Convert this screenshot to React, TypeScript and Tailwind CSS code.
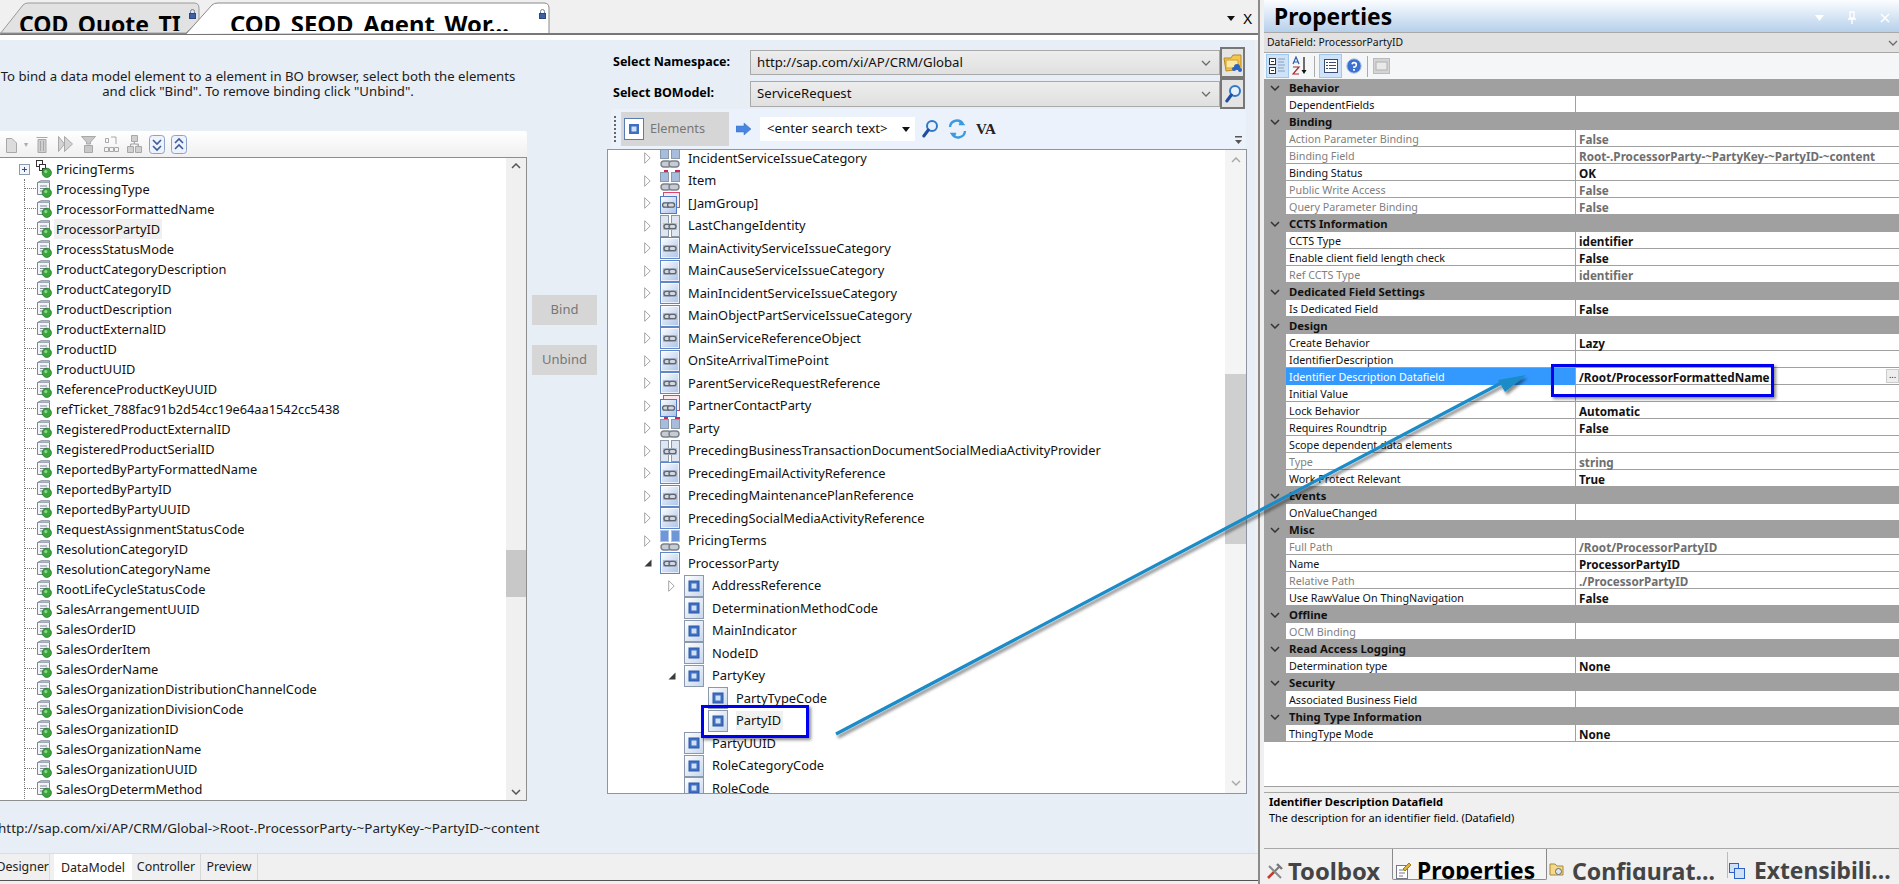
import React from "react";

const leftRows = ["PricingTerms","ProcessingType","ProcessorFormattedName","ProcessorPartyID","ProcessStatusMode","ProductCategoryDescription","ProductCategoryID","ProductDescription","ProductExternalID","ProductID","ProductUUID","ReferenceProductKeyUUID","refTicket_788fac91b2d54cc19e64aa1542cc5438","RegisteredProductExternalID","RegisteredProductSerialID","ReportedByPartyFormattedName","ReportedByPartyID","ReportedByPartyUUID","RequestAssignmentStatusCode","ResolutionCategoryID","ResolutionCategoryName","RootLifeCycleStatusCode","SalesArrangementUUID","SalesOrderID","SalesOrderItem","SalesOrderName","SalesOrganizationDistributionChannelCode","SalesOrganizationDivisionCode","SalesOrganizationID","SalesOrganizationName","SalesOrganizationUUID","SalesOrgDetermMethod"];

type Kind = "el" | "link" | "red2" | "redbox" | "split" | "blue2";
type TreeRow = { t: string; k: Kind; l: number; a: "closed" | "open" | "none" };
const rightRows: TreeRow[] = [
  { t: "IncidentServiceIssueCategory", k: "red2", l: 0, a: "closed" },
  { t: "Item", k: "red2", l: 0, a: "closed" },
  { t: "[JamGroup]", k: "redbox", l: 0, a: "closed" },
  { t: "LastChangeIdentity", k: "split", l: 0, a: "closed" },
  { t: "MainActivityServiceIssueCategory", k: "link", l: 0, a: "closed" },
  { t: "MainCauseServiceIssueCategory", k: "link", l: 0, a: "closed" },
  { t: "MainIncidentServiceIssueCategory", k: "link", l: 0, a: "closed" },
  { t: "MainObjectPartServiceIssueCategory", k: "link", l: 0, a: "closed" },
  { t: "MainServiceReferenceObject", k: "link", l: 0, a: "closed" },
  { t: "OnSiteArrivalTimePoint", k: "link", l: 0, a: "closed" },
  { t: "ParentServiceRequestReference", k: "link", l: 0, a: "closed" },
  { t: "PartnerContactParty", k: "redbox", l: 0, a: "closed" },
  { t: "Party", k: "red2", l: 0, a: "closed" },
  { t: "PrecedingBusinessTransactionDocumentSocialMediaActivityProvider", k: "split", l: 0, a: "closed" },
  { t: "PrecedingEmailActivityReference", k: "link", l: 0, a: "closed" },
  { t: "PrecedingMaintenancePlanReference", k: "link", l: 0, a: "closed" },
  { t: "PrecedingSocialMediaActivityReference", k: "link", l: 0, a: "closed" },
  { t: "PricingTerms", k: "blue2", l: 0, a: "closed" },
  { t: "ProcessorParty", k: "link", l: 0, a: "open" },
  { t: "AddressReference", k: "el", l: 1, a: "closed" },
  { t: "DeterminationMethodCode", k: "el", l: 1, a: "none" },
  { t: "MainIndicator", k: "el", l: 1, a: "none" },
  { t: "NodeID", k: "el", l: 1, a: "none" },
  { t: "PartyKey", k: "el", l: 1, a: "open" },
  { t: "PartyTypeCode", k: "el", l: 2, a: "none" },
  { t: "PartyID", k: "el", l: 2, a: "none" },
  { t: "PartyUUID", k: "el", l: 1, a: "none" },
  { t: "RoleCategoryCode", k: "el", l: 1, a: "none" },
  { t: "RoleCode", k: "el", l: 1, a: "none" },
];

type P = { g: string } | { n: string; v?: string; d?: boolean; sel?: boolean };
const props: P[] = [
  { g: "Behavior" },
  { n: "DependentFields" },
  { g: "Binding" },
  { n: "Action Parameter Binding", v: "False", d: true },
  { n: "Binding Field", v: "Root-.ProcessorParty-~PartyKey-~PartyID-~content", d: true },
  { n: "Binding Status", v: "OK" },
  { n: "Public Write Access", v: "False", d: true },
  { n: "Query Parameter Binding", v: "False", d: true },
  { g: "CCTS Information" },
  { n: "CCTS Type", v: "identifier" },
  { n: "Enable client field length check", v: "False" },
  { n: "Ref CCTS Type", v: "identifier", d: true },
  { g: "Dedicated Field Settings" },
  { n: "Is Dedicated Field", v: "False" },
  { g: "Design" },
  { n: "Create Behavior", v: "Lazy" },
  { n: "IdentifierDescription" },
  { n: "Identifier Description Datafield", v: "/Root/ProcessorFormattedName", sel: true },
  { n: "Initial Value" },
  { n: "Lock Behavior", v: "Automatic" },
  { n: "Requires Roundtrip", v: "False" },
  { n: "Scope dependent data elements" },
  { n: "Type", v: "string", d: true },
  { n: "Work Protect Relevant", v: "True" },
  { g: "Events" },
  { n: "OnValueChanged" },
  { g: "Misc" },
  { n: "Full Path", v: "/Root/ProcessorPartyID", d: true },
  { n: "Name", v: "ProcessorPartyID" },
  { n: "Relative Path", v: "./ProcessorPartyID", d: true },
  { n: "Use RawValue On ThingNavigation", v: "False" },
  { g: "Offline" },
  { n: "OCM Binding", d: true },
  { g: "Read Access Logging" },
  { n: "Determination type", v: "None" },
  { g: "Security" },
  { n: "Associated Business Field" },
  { g: "Thing Type Information" },
  { n: "ThingType Mode", v: "None" },
];

const Chain = ({ x, y }: { x: number; y: number }) => (
  <g transform={`translate(${x} ${y})`} fill="none" stroke="#5f6670" strokeWidth="1.3">
    <rect x="0" y="0" width="7" height="4.4" rx="2.2" fill="#d4d8de" />
    <rect x="5" y="0" width="7" height="4.4" rx="2.2" fill="#d4d8de" />
  </g>
);

const BoxFrame = () => (
  <>
    <rect x="0.5" y="0.5" width="19" height="21" fill="url(#fr)" stroke="#5f86c6" />
    <rect x="1.5" y="1.5" width="17" height="19" fill="none" stroke="#ffffff" opacity="0.7" />
  </>
);

function TreeIcon({ k }: { k: Kind }) {
  if (k === "el")
    return (
      <svg width="20" height="22" viewBox="0 0 20 22" className="shrink-0">
        <rect x="0.5" y="0.5" width="19" height="21" fill="url(#fe)" stroke="#8b99ad" />
        <rect x="5" y="6" width="10" height="10" fill="#3f6fc0" stroke="#2f5aa8" />
        <rect x="7.5" y="8.5" width="5" height="5" fill="#cfe0f7" />
      </svg>
    );
  if (k === "link")
    return (
      <svg width="20" height="22" viewBox="0 0 20 22" className="shrink-0">
        <BoxFrame />
        <rect x="3" y="8" width="14" height="7" fill="#aebcd6" />
        <Chain x={4} y={9.3} />
      </svg>
    );
  if (k === "redbox")
    return (
      <svg width="20" height="22" viewBox="0 0 20 22" className="shrink-0">
        <rect x="3.5" y="0.5" width="16" height="15" fill="#fbe9ee" stroke="#d9486b" />
        <rect x="0.5" y="4.5" width="16" height="17" fill="url(#fr)" stroke="#4f7ac4" />
        <rect x="3" y="10" width="11" height="6" fill="#aebcd6" />
        <Chain x={2.6} y={10.8} />
      </svg>
    );
  if (k === "split")
    return (
      <svg width="20" height="22" viewBox="0 0 20 22" className="shrink-0">
        <rect x="0.5" y="0.5" width="8" height="21" fill="#dfe6f0" stroke="#8b99ad" />
        <rect x="11.5" y="0.5" width="8" height="21" fill="#dfe6f0" stroke="#8b99ad" />
        <rect x="3" y="8" width="14" height="7" fill="#b7c3d8" />
        <Chain x={4} y={9.3} />
      </svg>
    );
  const red = k === "red2";
  return (
    <svg width="20" height="22" viewBox="0 0 20 22" className="shrink-0">
      {red && <rect x="4" y="0" width="4" height="4" fill="#d4244f" />}
      {red && <rect x="15" y="0" width="5" height="4" fill="#d4244f" />}
      <rect x="0.5" y={red ? 2.5 : 0.5} width="8" height={red ? 9 : 11} fill={red ? "#a7bddb" : "#6f97d8"} stroke={red ? "#8b99ad" : "#a9c3ea"} />
      <rect x="11.5" y={red ? 2.5 : 0.5} width="8" height={red ? 9 : 11} fill={red ? "#a7bddb" : "#6f97d8"} stroke={red ? "#8b99ad" : "#a9c3ea"} />
      <g transform="translate(0 13)" fill="#c7ccd4" stroke="#7b818a" strokeWidth="1.4">
        <rect x="1" y="1" width="10" height="6" rx="3" />
        <rect x="9" y="1" width="10" height="6" rx="3" />
      </g>
    </svg>
  );
}

function Expander({ a }: { a: TreeRow["a"] }) {
  if (a === "none") return <span className="w-[7px]" />;
  if (a === "open")
    return (
      <svg width="8" height="8" viewBox="0 0 8 8" className="shrink-0">
        <path d="M7.5 0.5V7.5H0.5Z" fill="#3b3b3b" />
      </svg>
    );
  return (
    <svg width="7" height="12" viewBox="0 0 7 12" className="shrink-0">
      <path d="M0.7 0.7L6.2 6L0.7 11.3Z" fill="#fff" stroke="#a6a6a6" />
    </svg>
  );
}

const DocGreen = ({ group }: { group?: boolean }) => (
  <svg width="16" height="18" viewBox="0 0 16 18" className="shrink-0">
    {group ? (
      <g fill="#fff" stroke="#333" strokeWidth="1">
        <rect x="0.5" y="0.5" width="6" height="6" />
        <rect x="3.5" y="4.5" width="6" height="6" />
        <rect x="6.5" y="8.5" width="4" height="4" />
      </g>
    ) : (
      <g>
        <path d="M1.5 2.5H13.5V14.5H1.5Z" fill="#f2f4f7" stroke="#7d8794" />
        <path d="M1.5 2.5L5 0.8H13.5V2.5" fill="#c4ccd6" stroke="#7d8794" />
        <path d="M4 6H11M4 8.5H11M4 11H9" stroke="#7f8a99" strokeWidth="1" />
      </g>
    )}
    <circle cx="10.8" cy="12.8" r="4.6" fill="#3aa53a" stroke="#23762b" strokeWidth="0.8" />
    <circle cx="9.8" cy="11.6" r="1.6" fill="#8ad88a" />
  </svg>
);

const ToolGlyph = ({ i }: { i: number }) => (
  <svg width="17" height="20" viewBox="0 0 17 20" className="shrink-0" fill="#c9c9c9" stroke="#a8a8a8">
    {i === 0 && <path d="M2.5 4.5H8L12.5 9V18.5H2.5Z" fill="#dcdcdc" />}
    {i === 1 && <path d="M2.5 3.5H13.5M4 5.5H12V18.5H4ZM6.5 7V17M9.5 7V17" fill="#cfcfcf" />}
    {i === 2 && <path d="M1.5 2.5L7.5 10L1.5 17.5ZM7.5 2.5L15.5 10L7.5 17.5Z" fill="#d4d4d4" />}
    {i === 3 && <path d="M1.5 2.5H15.5L10.5 8V10H6.5V8ZM4.5 11.5H12.5V18.5H4.5Z" fill="#c8c8c8" />}
    {i === 4 && <path d="M2.5 4.5H5.5V8.5H2.5ZM1.5 13.5H5.5V17.5H1.5ZM6.5 13.5H10.5V17.5H6.5ZM11.5 13.5H15.5V17.5H11.5ZM8 3H13V10" fill="none" />}
    {i === 5 && <path d="M5.5 1.5H11.5V7.5H5.5ZM1.5 12.5H7.5V18.5H1.5ZM9.5 12.5H15.5V18.5H9.5ZM8.5 7.5V10H4.5V12.5M8.5 10H12.5V12.5" fill="#d0d0d0" />}
  </svg>
);

const RoundToggle = ({ up }: { up?: boolean }) => (
  <svg width="16" height="19" viewBox="0 0 16 19" className="shrink-0">
    <rect x="0.5" y="0.5" width="15" height="18" rx="3" fill="#eef3fb" stroke="#8aa3c9" />
    <path d={up ? "M4 8L8 4L12 8M4 14L8 10L12 14" : "M4 5L8 9L12 5M4 11L8 15L12 11"} fill="none" stroke="#3c5a9e" strokeWidth="1.6" />
  </svg>
);

const Magnifier = () => (
  <svg width="16" height="20" viewBox="0 0 16 20" className="shrink-0">
    <circle cx="10" cy="7" r="5" fill="#e7f1fb" stroke="#2f78c8" strokeWidth="2" />
    <path d="M6.3 11L1.8 17" stroke="#1f4f9c" strokeWidth="3" strokeLinecap="round" />
  </svg>
);

const Caret = () => (
  <svg width="10" height="6" viewBox="0 0 10 6" className="shrink-0">
    <path d="M1 1L5 5L9 1" fill="none" stroke="#6b6b6b" strokeWidth="1.3" />
  </svg>
);

const Lock = () => (
  <svg width="7" height="10" viewBox="0 0 7 10" className="shrink-0">
    <path d="M1.5 4.5V2.5A2 2 0 0 1 5.5 2.5V4.5" fill="none" stroke="#6f7f99" />
    <rect x="0.5" y="4.5" width="6" height="5" fill="#3b5fa8" stroke="#2c477f" />
  </svg>
);

function Combo({ text, h }: { text: string; h: string }) {
  return (
    <div className={`flex-1 ${h} flex items-center justify-between pl-[6px] pr-[8px] border border-[#a9a9a9] bg-gradient-to-b from-[#ededed] to-[#e0e0e0] text-[13.2px] text-[#111]`}>
      <span>{text}</span>
      <Caret />
    </div>
  );
}

const PropsChevron = () => (
  <svg width="10" height="6" viewBox="0 0 10 6" className="shrink-0">
    <path d="M1 1L5 5L9 1" fill="none" stroke="#333" strokeWidth="1.5" />
  </svg>
);

export default function App() {
  return (
    <div className="relative w-[1899px] h-[884px] overflow-hidden flex bg-[#f0f0f0] font-['Noto_Sans',sans-serif] text-black">
      <svg width="0" height="0" className="absolute">
        <defs>
          <linearGradient id="fr" x1="0" y1="0" x2="1" y2="1">
            <stop offset="0" stopColor="#ffffff" />
            <stop offset="1" stopColor="#a9c1e8" />
          </linearGradient>
          <linearGradient id="fe" x1="0" y1="0" x2="1" y2="1">
            <stop offset="0" stopColor="#ffffff" />
            <stop offset="1" stopColor="#c7d6ec" />
          </linearGradient>
          <filter id="sh" x="-10%" y="-10%" width="120%" height="120%">
            <feDropShadow dx="2" dy="3" stdDeviation="1.5" floodColor="#000" floodOpacity="0.45" />
          </filter>
        </defs>
      </svg>

      {/* Left document area */}
      <div className="w-[1260px] shrink-0 flex flex-col border-r-2 border-[#8a8a8a]">
        <div className="relative h-[35px] shrink-0 border-b-2 border-[#777] flex items-start">
          <svg width="560" height="34" viewBox="0 0 560 34" className="absolute left-0 top-0">
            <path d="M0 34L23 5Q25 3 28 3H194Q199 3 199 8V20L186 33H0Z" fill="#e2e2e2" stroke="#9a9a9a" />
            <path d="M186 34L212 5Q214 3 218 3H544Q549 3 549 8V33" fill="#fff" stroke="#8a8a8a" />
          </svg>
          <span className="relative ml-[19px] w-[162px] h-[31px] pt-[8px] overflow-hidden text-[23px] leading-[32px] font-bold whitespace-nowrap">COD_Quote_TI</span>
          <span className="relative ml-[8px] mt-[9px]"><Lock /></span>
          <span className="relative ml-[34px] w-[280px] h-[31px] pt-[8px] overflow-hidden text-[23.8px] leading-[32px] font-bold whitespace-nowrap">COD_SEOD_Agent_Wor...</span>
          <span className="relative ml-[29px] mt-[9px]"><Lock /></span>
          <span className="ml-auto mr-[6px] mt-[11px] flex items-center gap-[8px]">
            <svg width="8" height="5" viewBox="0 0 8 5"><path d="M0 0H8L4 5Z" fill="#111" /></svg>
            <span className="text-[15px] leading-none">X</span>
          </span>
        </div>
        <div className="h-[5px] shrink-0 bg-white" />
        <div className="h-[813px] shrink-0 flex bg-[#e8eef5] mr-[3px]">
          {/* data model */}
          <div className="w-[527px] shrink-0 flex flex-col">
            <div className="h-[91px] pt-[29px] w-[516px] text-center text-[13.2px] leading-[15px] text-[#1a1a1a] whitespace-nowrap">
              <p>To bind a data model element to a element in BO browser, select both the elements</p>
              <p>and click "Bind". To remove binding click "Unbind".</p>
            </div>
            <div className="h-[26px] flex items-center gap-[6px] pl-[4px] bg-gradient-to-b from-white to-[#f0f0f0] rounded-tr-[3px]">
              <ToolGlyph i={0} />
              <span className="text-[8px] text-[#aaa] -ml-[3px]">▾</span>
              <ToolGlyph i={1} />
              <ToolGlyph i={2} />
              <ToolGlyph i={3} />
              <ToolGlyph i={4} />
              <ToolGlyph i={5} />
              <RoundToggle />
              <RoundToggle up />
            </div>
            <div className="h-[644px] flex bg-white border-y border-r border-[#8e8e8e]">
              <div className="flex-1 pt-[1px] overflow-hidden">
                {leftRows.map((t, i) => (
                  <div key={t} className="h-[20px] flex items-center text-[12.8px] text-[#111] whitespace-nowrap">
                    <div className="w-[24px] shrink-0" />
                    <div className={`relative w-[12px] h-full shrink-0 ${i === 0 ? "" : "border-l border-dotted border-[#777]"}`}>
                      {i === 0 ? (
                        <svg width="11" height="11" viewBox="0 0 11 11" className="absolute -left-[5px] top-[5px]">
                          <rect x="0.5" y="0.5" width="10" height="10" fill="#f3f6fb" stroke="#8a9bb0" />
                          <path d="M3 5.5H8M5.5 3V8" stroke="#33507a" />
                        </svg>
                      ) : (
                        <div className="h-[10px] border-b border-dotted border-[#777]" />
                      )}
                    </div>
                    <DocGreen group={i === 0} />
                    <span className={`ml-[2px] px-[2px] leading-[20px] ${t === "ProcessorPartyID" ? "bg-[#f0f0f0]" : ""}`}>{t}</span>
                  </div>
                ))}
              </div>
              <div className="w-[20px] shrink-0 bg-[#f0f0f0] flex flex-col items-center">
                <div className="h-[16px] flex items-center justify-center">
                  <svg width="10" height="6" viewBox="0 0 10 6"><path d="M1 5L5 1L9 5" fill="none" stroke="#555" strokeWidth="1.5" /></svg>
                </div>
                <div className="h-[376px]" />
                <div className="h-[47px] w-full bg-[#c8c8c8]" />
                <div className="flex-1" />
                <div className="h-[16px] flex items-center justify-center">
                  <svg width="10" height="6" viewBox="0 0 10 6"><path d="M1 1L5 5L9 1" fill="none" stroke="#555" strokeWidth="1.5" /></svg>
                </div>
              </div>
            </div>
            <div className="pt-[18px] text-[13.45px] leading-[18px] -ml-[2px] whitespace-nowrap text-[#222]">http://sap.com/xi/AP/CRM/Global-&gt;Root-.ProcessorParty-~PartyKey-~PartyID-~content</div>
          </div>

          {/* Bind buttons */}
          <div className="w-[80px] shrink-0 pl-[5px] pt-[255px] flex flex-col gap-[20px]">
            <div className="w-[65px] h-[30px] flex items-center justify-center bg-[#d6d6d6] text-[13px] text-[#777]">Bind</div>
            <div className="w-[65px] h-[30px] flex items-center justify-center bg-[#d6d6d6] text-[13px] text-[#777]">Unbind</div>
          </div>

          {/* BO browser */}
          <div className="w-[640px] shrink-0 flex flex-col pt-[7px]">
            <div className="flex items-center h-[31px]">
              <span className="w-[143px] pl-[6px] text-[12.5px] font-bold">Select Namespace:</span>
              <Combo text="http://sap.com/xi/AP/CRM/Global" h="h-[25px]" />
              <div className="w-[25px] h-[31px] shrink-0 border-2 border-[#777] bg-[#e4e4e4] flex items-center justify-center">
                <svg width="20" height="22" viewBox="0 0 20 22">
                  <path d="M1 6H8L10 3H18V17L3 19Z" fill="#f3c64f" stroke="#b88a1d" />
                  <path d="M3 8H15V16H3Z" fill="#fbe7a0" stroke="#cfa031" />
                  <circle cx="14" cy="15" r="3" fill="#2c62c4" />
                  <circle cx="11" cy="17" r="2" fill="#2c62c4" />
                  <circle cx="17" cy="18" r="2" fill="#2c62c4" />
                </svg>
              </div>
              <div className="w-[2px]" />
            </div>
            <div className="flex items-center h-[31px]">
              <span className="w-[143px] pl-[6px] text-[12.5px] font-bold">Select BOModel:</span>
              <Combo text="ServiceRequest" h="h-[26px]" />
              <div className="w-[25px] h-[31px] shrink-0 border-2 border-[#777] bg-[#e4e4e4] flex items-center justify-center">
                <Magnifier />
              </div>
              <div className="w-[2px]" />
            </div>
            <div className="h-[40px] ml-[4px] mr-[1px] relative flex items-center bg-[#ebf2fb] rounded-[3px]">
              <span className="ml-[3px] w-[2px] h-[26px] border-l-2 border-dotted border-[#666]" />
              <div className="ml-[5px] w-[108px] h-[34px] flex items-center bg-[#d6d6d6] pl-[3px] gap-[6px] text-[12.7px] text-[#777]">
                <svg width="20" height="22" viewBox="0 0 20 22" className="shrink-0">
                  <rect x="0.5" y="0.5" width="19" height="21" fill="#fff" stroke="#5b7bb0" />
                  <rect x="5" y="6" width="10" height="10" fill="#3f6fc0" />
                  <rect x="7.5" y="8.5" width="5" height="5" fill="#cfe0f7" />
                </svg>
                Elements
              </div>
              <svg width="16" height="12" viewBox="0 0 16 12" className="ml-[7px] shrink-0">
                <path d="M0 3H8V0L15 6L8 12V9H0Z" fill="#4a86e0" stroke="#3a6cc0" strokeWidth="0.5" />
              </svg>
              <div className="ml-[8px] w-[155px] h-[24px] flex items-center justify-between bg-white pl-[7px] pr-[5px] text-[13.3px] text-[#111] whitespace-nowrap">
                &lt;enter search text&gt;
                <svg width="8" height="5" viewBox="0 0 8 5"><path d="M0 0H8L4 5Z" fill="#111" /></svg>
              </div>
              <span className="ml-[7px]"><Magnifier /></span>
              <svg width="19" height="22" viewBox="0 0 19 22" className="ml-[10px] shrink-0" fill="none" stroke="#3b9ae0" strokeWidth="2.4">
                <path d="M2 9A7 7 0 0 1 15 6" />
                <path d="M17 13A7 7 0 0 1 4 16" />
                <path d="M12 3L17 7H11ZM7 19L2 15H8Z" fill="#3b9ae0" strokeWidth="0.5" />
              </svg>
              <span className="ml-[9px] text-[15px] font-bold font-['Liberation_Serif',serif] text-[#222]">VA</span>
              <svg width="7" height="10" viewBox="0 0 7 10" className="absolute right-[4px] bottom-[3px]">
                <path d="M0 0H7V1.5H0ZM0 4H7L3.5 8Z" fill="#555" />
              </svg>
            </div>
            <div className="h-[645px] flex bg-white border border-[#8e95a0] relative">
              <div className="flex-1 overflow-hidden">
                <div className="-mt-[3px]">
                  {rightRows.map((r) => (
                    <div key={r.t + r.l} className={`h-[22.5px] flex items-center text-[12.85px] text-[#111] whitespace-nowrap ${r.l === 0 ? "pl-[36px]" : r.l === 1 ? "pl-[60px]" : "pl-[84px]"}`}>
                      <span className="w-[16px] flex items-center"><Expander a={r.a} /></span>
                      <TreeIcon k={r.k} />
                      <span className={`ml-[8px] ${r.t === "PartyID" ? "bg-[#f0f0f0] pr-[2px]" : ""}`}>{r.t}</span>
                    </div>
                  ))}
                </div>
              </div>
              <div className="w-[21px] shrink-0 bg-[#f4f4f4] flex flex-col items-center">
                <div className="h-[20px] flex items-center justify-center">
                  <svg width="10" height="6" viewBox="0 0 10 6"><path d="M1 5L5 1L9 5" fill="none" stroke="#aaa" strokeWidth="1.5" /></svg>
                </div>
                <div className="h-[204px]" />
                <div className="h-[170px] w-full bg-[#cfcfcf]" />
                <div className="flex-1" />
                <div className="h-[20px] flex items-center justify-center">
                  <svg width="10" height="6" viewBox="0 0 10 6"><path d="M1 1L5 5L9 1" fill="none" stroke="#aaa" strokeWidth="1.5" /></svg>
                </div>
              </div>
              {/* PartyID callout */}
              <div className="absolute left-[93px] top-[555px] w-[108px] h-[33px] border-[3px] border-[#0000f0] shadow-[2px_2px_3px_rgba(0,0,0,0.45)]" />
            </div>
          </div>
        </div>
        <div className="flex-1 flex flex-col">
          <div className="h-[27px] flex items-stretch text-[12.4px] border-t border-[#ddd] text-[#222]">
            <div className="w-[50px] shrink-0 overflow-hidden flex justify-end items-center border-r border-[#ddd] whitespace-nowrap">Designer</div>
            <div className="w-[78px] ml-[4px] shrink-0 bg-white flex items-center justify-center pt-[3px]">DataModel</div>
            <div className="w-[69px] shrink-0 flex items-center justify-center border-r border-[#d8d8d8]">Controller</div>
            <div className="w-[57px] shrink-0 flex items-center justify-center border-r border-[#d8d8d8]">Preview</div>
          </div>
          <div className="h-[1px] bg-[#555]" />
        </div>
      </div>

      {/* Properties */}
      <div className="flex-1 pl-[4px] flex flex-col">
        <div className="h-[32px] shrink-0 flex items-center justify-between pl-[10px] pr-[9px] pt-[3px] bg-gradient-to-b from-[#fbfdff] to-[#b6d0ea]">
          <span className="text-[22.8px] font-bold leading-none">Properties</span>
          <span className="flex items-center gap-[24px] text-white">
            <svg width="9" height="6" viewBox="0 0 9 6"><path d="M0 0H9L4.5 6Z" fill="#fff" /></svg>
            <svg width="8" height="13" viewBox="0 0 8 13" fill="none" stroke="#fff" strokeWidth="1.4"><path d="M2 1H6V7H2ZM0 8H8M4 8V13" /></svg>
            <svg width="10" height="10" viewBox="0 0 10 10" fill="none" stroke="#fff" strokeWidth="1.5"><path d="M1 1L9 9M9 1L1 9" /></svg>
          </span>
        </div>
        <div className="h-[21px] shrink-0 flex items-center justify-between pl-[3px] pr-[1px] bg-[#e1e1e1] border-y border-[#a8a8a8] text-[10.4px] text-[#111]">
          <span>DataField: ProcessorPartyID</span>
          <Caret />
        </div>
        <div className="h-[26px] shrink-0 flex items-center pl-[2px] bg-[#f5f6f7]">
          <div className="w-[23px] h-[24px] flex items-center justify-center bg-[#cfe3f8] border border-[#a0c8ee]">
            <svg width="17" height="18" viewBox="0 0 17 18">
              <rect x="0.5" y="1.5" width="6" height="6" fill="#fff" stroke="#333" />
              <rect x="0.5" y="10.5" width="6" height="6" fill="#fff" stroke="#333" />
              <path d="M2 4.5H5M2 13.5H5" stroke="#333" />
              <path d="M9 2H16M9 5H15M9 8H16M9 11H15M9 14H16" stroke="#8aa0bb" />
            </svg>
          </div>
          <svg width="17" height="20" viewBox="0 0 17 20" className="ml-[3px]">
            <path d="M1 8L4 1L7 8M2.2 6H5.8" fill="none" stroke="#2c5cb0" strokeWidth="1.2" />
            <path d="M1 11H7L1 18H7" fill="none" stroke="#a12b2b" strokeWidth="1.2" />
            <path d="M12 1V16" stroke="#111" strokeWidth="1.2" />
            <path d="M9.5 14H14.5L12 18Z" fill="#111" />
          </svg>
          <div className="ml-[5px] w-px h-[21px] bg-[#aaa]" />
          <div className="ml-[4px] w-[23px] h-[24px] flex items-center justify-center bg-[#cfe3f8] border border-[#a0c8ee]">
            <svg width="14" height="14" viewBox="0 0 14 14">
              <rect x="0.5" y="0.5" width="13" height="13" fill="#fff" stroke="#3a4a75" />
              <path d="M2 3.5H4M5 3.5H12M2 6.5H4M5 6.5H12M2 9.5H4M5 9.5H12" stroke="#3a4a75" />
            </svg>
          </div>
          <svg width="16" height="16" viewBox="0 0 16 16" className="ml-[4px]">
            <circle cx="8" cy="8" r="7.2" fill="#3b6fd0" stroke="#a8c3ea" />
            <path d="M6 6.2A2.2 2.2 0 1 1 8 9V10" fill="none" stroke="#fff" strokeWidth="1.6" />
            <rect x="7.1" y="11" width="1.8" height="1.8" fill="#fff" />
          </svg>
          <div className="ml-[5px] w-px h-[21px] bg-[#aaa]" />
          <svg width="17" height="16" viewBox="0 0 17 16" className="ml-[5px]">
            <rect x="0.5" y="0.5" width="16" height="15" fill="#d4d4d4" stroke="#bbb" />
            <rect x="3" y="4" width="11" height="8" fill="#e9e9e9" stroke="#b0b0b0" />
          </svg>
        </div>
        <div className="h-[708px] shrink-0 bg-white border-b border-[#a0a0a0]">
          {props.map((p, i) =>
            "g" in p ? (
              <div key={i} className="h-[17px] flex items-center pt-[1px] bg-[#a0a0a0] text-[11.3px] font-bold text-[#111]">
                <span className="w-[25px] pl-[6px] flex items-center"><PropsChevron /></span>
                <span>{p.g}</span>
              </div>
            ) : (
              <div key={i} className="h-[17px] flex">
                <div className="w-[22px] shrink-0 bg-[#a0a0a0]" />
                <div className={`w-[289px] h-[17px] shrink-0 pl-[3px] pt-[1px] leading-[16px] text-[10.75px] whitespace-nowrap overflow-hidden ${p.sel ? "bg-[#3399ff] text-white" : `border-b border-[#a0a0a0] ${p.d ? "text-[#808080]" : "text-[#111]"}`}`}>{p.n}</div>
                <div className={`relative flex-1 h-[17px] pl-[3px] pt-[1px] leading-[16px] text-[11.7px] font-bold whitespace-nowrap border-b border-l border-[#a0a0a0] ${p.d ? "text-[#6e6e6e]" : "text-[#111]"}`}>
                  {p.v}
                  {p.sel && (
                    <span className="absolute right-0 top-[1px] w-[13px] h-[14px] bg-[#eee] border border-[#ccc] text-[9px] leading-[10px] text-center font-normal">...</span>
                  )}
                </div>
              </div>
            )
          )}
        </div>
        <div className="h-[5px] shrink-0" />
        <div className="h-[57px] shrink-0 bg-[#f0f0f0] border-y border-[#a8a8a8] pl-[5px] pt-[1px]">
          <div className="font-bold text-[11.2px] leading-[16px]">Identifier Description Datafield</div>
          <div className="text-[10.9px] leading-[16px]">The description for an identifier field. (Datafield)</div>
        </div>
        <div className="flex-1 flex items-start font-bold leading-[32px] text-[#444] whitespace-nowrap">
          <svg width="17" height="17" viewBox="0 0 17 17" className="ml-[2px] mt-[14px] shrink-0">
            <path d="M2 15L8 9" stroke="#c23a2a" strokeWidth="2.6" />
            <path d="M15 15L3 3" stroke="#8a8a8a" strokeWidth="2" />
            <path d="M9 8L13 4" stroke="#777" strokeWidth="2" />
            <path d="M11 1L16 6" stroke="#777" strokeWidth="2.4" />
          </svg>
          <span className="ml-[5px] w-[92px] h-[31px] pt-[6px] overflow-hidden text-[23.8px]">Toolbox</span>
          <div className="ml-[12px] w-[155px] h-[31px] flex items-start bg-[#f4f4f4] border-x border-b border-[#8a8a8a] rounded-b-[2px]">
            <svg width="17" height="17" viewBox="0 0 17 17" className="ml-[2px] mt-[13px] shrink-0">
              <rect x="1.5" y="3.5" width="11" height="13" fill="#fff" stroke="#778" />
              <path d="M4 8H10M4 11H10M4 14H8" stroke="#778" />
              <path d="M8 7L14 1L16 3L10 9Z" fill="#e0b23a" stroke="#a67c12" />
            </svg>
            <span className="ml-[5px] w-[120px] h-[30px] pt-[6px] overflow-hidden text-[22.8px] text-black">Properties</span>
          </div>
          <svg width="16" height="16" viewBox="0 0 16 16" className="ml-[2px] mt-[13px] shrink-0">
            <path d="M1 2H6L8 4H14V13H1Z" fill="#f4d98a" stroke="#a98a3a" />
            <circle cx="9.5" cy="9.5" r="3" fill="#dfe6ee" stroke="#667" />
          </svg>
          <span className="ml-[7px] w-[143px] h-[31px] pt-[6px] overflow-hidden text-[23.1px]">Configurat...</span>
          <div className="ml-[12px] mt-[3px] w-px h-[26px] bg-[#bbb]" />
          <svg width="16" height="17" viewBox="0 0 16 17" className="ml-[1px] mt-[13px] shrink-0">
            <rect x="0.5" y="1.5" width="9" height="9" fill="#cfe0f7" stroke="#2c62c4" />
            <rect x="5.5" y="6.5" width="10" height="10" fill="#cfe0f7" stroke="#2c62c4" />
          </svg>
          <span className="ml-[9px] w-[140px] h-[31px] pt-[6px] overflow-hidden text-[22.8px]">Extensibili...</span>
        </div>
      </div>

      {/* Callouts lying over the properties grid */}
      <div className="absolute left-[1551px] top-[364px] w-[223px] h-[33px] border-[3px] border-[#0000f0] shadow-[2px_2px_3px_rgba(0,0,0,0.45)]" />
      <svg width="1899" height="884" viewBox="0 0 1899 884" className="absolute left-0 top-0 pointer-events-none">
        <g filter="url(#sh)">
          <path d="M836 734L1505 381" stroke="#1a8cc8" strokeWidth="3.2" />
          <path d="M1526 375L1498 380L1505 392Z" fill="#1a8cc8" />
        </g>
      </svg>
    </div>
  );
}
